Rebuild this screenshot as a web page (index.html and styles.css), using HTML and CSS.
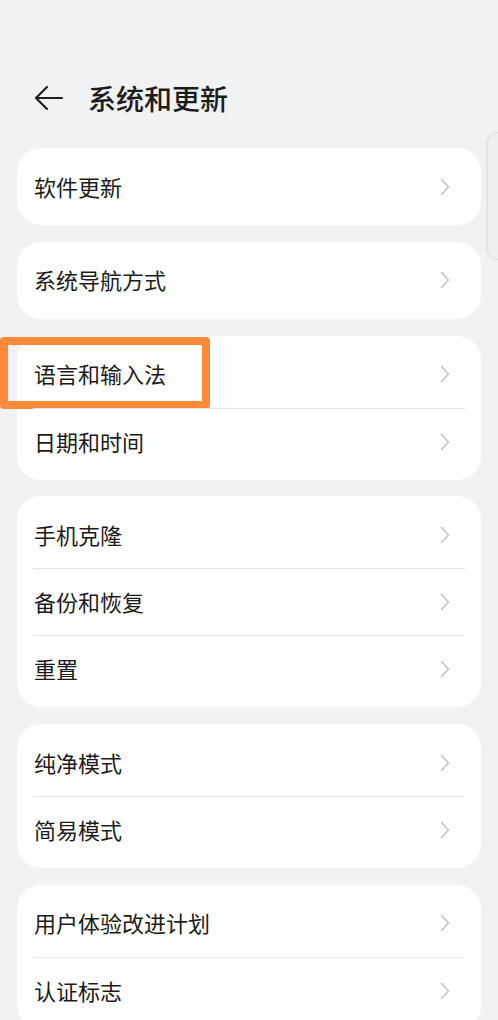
FILE: index.html
```html
<!DOCTYPE html>
<html lang="zh-CN">
<head>
<meta charset="utf-8">
<title>系统和更新</title>
<link rel="stylesheet" href="styles.css">
</head>
<body>
<div class="page">
  <header class="header">
    <svg class="back" width="30" height="26" viewBox="0 0 30 26" aria-hidden="true">
      <path d="M28 13 H2 M13 2 L2 13 L13 24" fill="none" stroke="#1f1f1f" stroke-width="2.2" stroke-linecap="round" stroke-linejoin="round"/>
    </svg>
    <h1 class="title">系统和更新</h1>
  </header>

  <main class="list">
    <section class="card">
      <div class="row"><span class="label">软件更新</span><svg class="chev" width="10" height="18" viewBox="0 0 10 18"><path d="M1.5 1.5 L8.5 9 L1.5 16.5" fill="none" stroke="#c4c4c6" stroke-width="1.6" stroke-linecap="round" stroke-linejoin="round"/></svg></div>
    </section>
    <section class="card">
      <div class="row"><span class="label">系统导航方式</span><svg class="chev" width="10" height="18" viewBox="0 0 10 18"><path d="M1.5 1.5 L8.5 9 L1.5 16.5" fill="none" stroke="#c4c4c6" stroke-width="1.6" stroke-linecap="round" stroke-linejoin="round"/></svg></div>
    </section>
    <section class="card">
      <div class="row highlighted"><span class="label">语言和输入法</span><svg class="chev" width="10" height="18" viewBox="0 0 10 18"><path d="M1.5 1.5 L8.5 9 L1.5 16.5" fill="none" stroke="#c4c4c6" stroke-width="1.6" stroke-linecap="round" stroke-linejoin="round"/></svg><span class="mark"></span></div>
      <div class="row"><span class="label">日期和时间</span><svg class="chev" width="10" height="18" viewBox="0 0 10 18"><path d="M1.5 1.5 L8.5 9 L1.5 16.5" fill="none" stroke="#c4c4c6" stroke-width="1.6" stroke-linecap="round" stroke-linejoin="round"/></svg></div>
    </section>
    <section class="card">
      <div class="row"><span class="label">手机克隆</span><svg class="chev" width="10" height="18" viewBox="0 0 10 18"><path d="M1.5 1.5 L8.5 9 L1.5 16.5" fill="none" stroke="#c4c4c6" stroke-width="1.6" stroke-linecap="round" stroke-linejoin="round"/></svg></div>
      <div class="row"><span class="label">备份和恢复</span><svg class="chev" width="10" height="18" viewBox="0 0 10 18"><path d="M1.5 1.5 L8.5 9 L1.5 16.5" fill="none" stroke="#c4c4c6" stroke-width="1.6" stroke-linecap="round" stroke-linejoin="round"/></svg></div>
      <div class="row"><span class="label">重置</span><svg class="chev" width="10" height="18" viewBox="0 0 10 18"><path d="M1.5 1.5 L8.5 9 L1.5 16.5" fill="none" stroke="#c4c4c6" stroke-width="1.6" stroke-linecap="round" stroke-linejoin="round"/></svg></div>
    </section>
    <section class="card">
      <div class="row"><span class="label">纯净模式</span><svg class="chev" width="10" height="18" viewBox="0 0 10 18"><path d="M1.5 1.5 L8.5 9 L1.5 16.5" fill="none" stroke="#c4c4c6" stroke-width="1.6" stroke-linecap="round" stroke-linejoin="round"/></svg></div>
      <div class="row"><span class="label">简易模式</span><svg class="chev" width="10" height="18" viewBox="0 0 10 18"><path d="M1.5 1.5 L8.5 9 L1.5 16.5" fill="none" stroke="#c4c4c6" stroke-width="1.6" stroke-linecap="round" stroke-linejoin="round"/></svg></div>
    </section>
    <section class="card">
      <div class="row"><span class="label">用户体验改进计划</span><svg class="chev" width="10" height="18" viewBox="0 0 10 18"><path d="M1.5 1.5 L8.5 9 L1.5 16.5" fill="none" stroke="#c4c4c6" stroke-width="1.6" stroke-linecap="round" stroke-linejoin="round"/></svg></div>
      <div class="row"><span class="label">认证标志</span><svg class="chev" width="10" height="18" viewBox="0 0 10 18"><path d="M1.5 1.5 L8.5 9 L1.5 16.5" fill="none" stroke="#c4c4c6" stroke-width="1.6" stroke-linecap="round" stroke-linejoin="round"/></svg></div>
    </section>
  </main>

  <div class="scroll-thumb"></div>
</div>
</body>
</html>
```

FILE: styles.css
```css
html, body {
  margin: 0;
  padding: 0;
  background: #f1f2f4;
}

body {
  font-family: "Noto Sans CJK SC", "Noto Sans", sans-serif;
  color: #1a1a1a;
  overflow: hidden;
}

.page {
  position: relative;
  width: 498px;
  height: 1020px;
  overflow: hidden;
}

.header {
  display: flex;
  align-items: center;
  height: 56px;
  margin-top: 70px;
  padding-left: 34px;
  gap: 24px;
}

.back {
  display: block;
  flex: none;
}

.title {
  margin: 0;
  font-size: 28px;
  font-weight: 500;
  line-height: 56px;
  color: #1c1c1c;
}

.list {
  display: flex;
  flex-direction: column;
  gap: 16.8px;
  margin-top: 22px;
  padding: 0 17px;
}

.card {
  background: #ffffff;
  border-radius: 24px;
  padding: 5px 16px;
}

.row {
  position: relative;
  display: flex;
  align-items: center;
  justify-content: space-between;
  height: 67px;
  padding-left: 1px;
}

.row + .row {
  border-top: 1px solid #e6e6e8;
  height: 66px;
}

.label {
  font-size: 22px;
  line-height: 30px;
  font-weight: 400;
  color: #1b1b1b;
  position: relative;
  top: -1px;
}

.chev {
  display: block;
  margin-right: 15px;
  flex: none;
}

.mark {
  position: absolute;
  left: -33px;
  top: -4px;
  width: 210px;
  height: 72px;
  box-sizing: border-box;
  border: 8px solid #ff8b3a;
  border-radius: 4px;
  pointer-events: none;
}

.scroll-thumb {
  position: absolute;
  left: 487px;
  top: 132px;
  width: 24px;
  height: 128px;
  box-sizing: border-box;
  border: 1px solid #dcdde0;
  border-radius: 11px;
  background: #eff0f2;
  box-shadow: -1px 0 3px rgba(0, 0, 0, 0.04);
}
```
